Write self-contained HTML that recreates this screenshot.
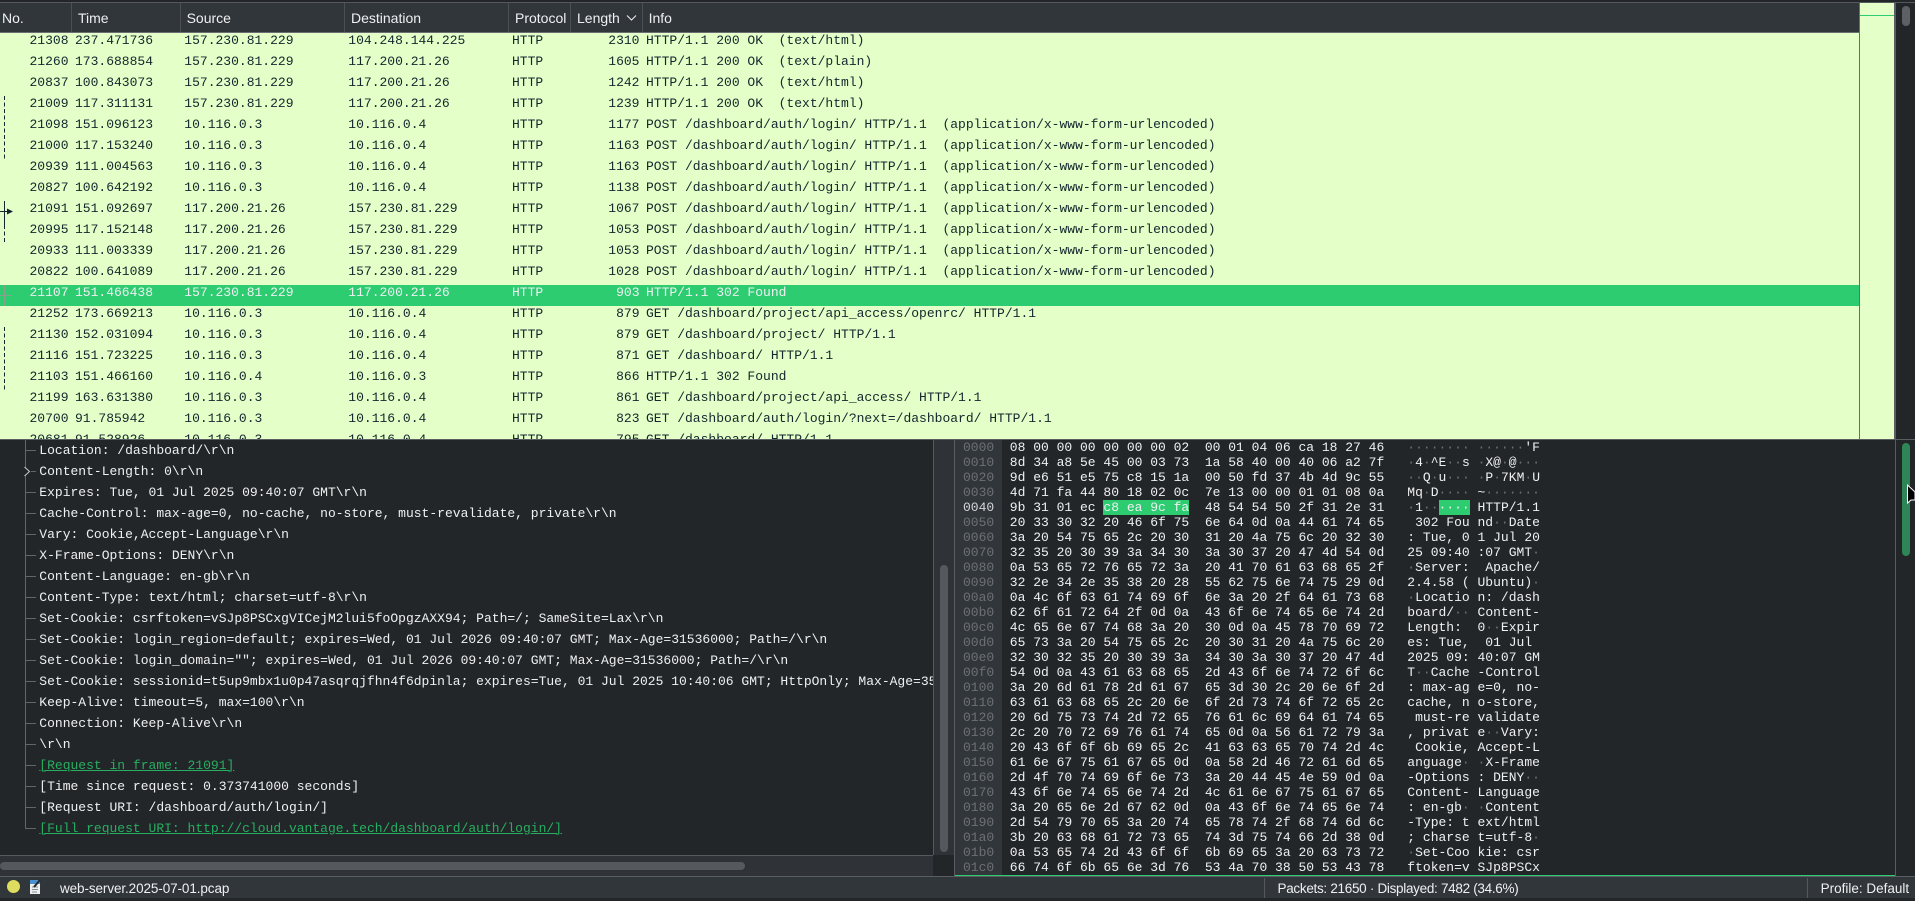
<!DOCTYPE html>
<html><head><meta charset="utf-8"><title>web-server.2025-07-01.pcap</title>
<style>
html,body{margin:0;padding:0;width:1915px;height:898px;overflow:hidden;background:#232629}
.a{position:absolute}
#hdr{left:0;top:3px;width:1859px;height:29px;background:#31363b}
#hdr span{position:absolute;top:0;line-height:31px;font:14px/31px "Liberation Sans",sans-serif;color:#eff0f1}
#hdr u{position:absolute;top:0;width:1px;height:29px;background:#4b5055}
#list{left:0;top:33px;width:1859px;height:406px;background:#e4ffc7;overflow:hidden;font:13px/15px "Liberation Mono",monospace;color:#12272e}
.r{position:relative;height:21px;white-space:pre}
.r span{position:absolute;top:0}
.r .n{left:0;width:68.5px;text-align:right}
.r .t{left:75px}.r .s{left:184.3px}.r .d{left:348.3px}.r .p{left:512px}
.r .l{left:570px;width:69.5px;text-align:right}.r .i{left:646px}
.sel{background:#2ecc71;color:#eff0f1}
#tree{left:39.3px;top:440px;width:893.7px;height:415px;overflow:hidden;font:13px/21px "Liberation Mono",monospace;color:#eff0f1;white-space:pre}
#tree a{color:#27ae60;text-decoration:underline}
pre{margin:0;font:13px/15px "Liberation Mono",monospace;color:#eff0f1;position:absolute;top:440px}
pre i{font-style:normal;color:#6d7175}
.st{position:absolute;top:877px;font:13.5px/24px "Liberation Sans",sans-serif;color:#eff0f1;white-space:pre}
</style></head><body>
<div class="a" style="left:0;top:2px;width:1915px;height:1px;background:#55595e"></div>
<div class="a" id="hdr">
<span style="left:2px">No.</span><u style="left:71px"></u>
<span style="left:78px">Time</span><u style="left:180px"></u>
<span style="left:186.6px">Source</span><u style="left:344px"></u>
<span style="left:351px">Destination</span><u style="left:508px"></u>
<span style="left:515px">Protocol</span><u style="left:570px"></u>
<span style="left:577px">Length</span><u style="left:642px"></u>
<span style="left:648.6px">Info</span>
<svg class="a" style="left:625px;top:11px" width="13" height="8"><path d="M2 1.500L6.500 6 11 1.500" fill="none" stroke="#eff0f1" stroke-width="1"/></svg>
</div>
<div class="a" style="left:0;top:32px;width:1859px;height:1px;background:#6a6e72"></div>
<div class="a" id="list">
<div class="r"><span class="n">21308</span><span class="t">237.471736</span><span class="s">157.230.81.229</span><span class="d">104.248.144.225</span><span class="p">HTTP</span><span class="l">2310</span><span class="i">HTTP/1.1 200 OK  (text/html)</span></div>
<div class="r"><span class="n">21260</span><span class="t">173.688854</span><span class="s">157.230.81.229</span><span class="d">117.200.21.26</span><span class="p">HTTP</span><span class="l">1605</span><span class="i">HTTP/1.1 200 OK  (text/plain)</span></div>
<div class="r"><span class="n">20837</span><span class="t">100.843073</span><span class="s">157.230.81.229</span><span class="d">117.200.21.26</span><span class="p">HTTP</span><span class="l">1242</span><span class="i">HTTP/1.1 200 OK  (text/html)</span></div>
<div class="r"><span class="n">21009</span><span class="t">117.311131</span><span class="s">157.230.81.229</span><span class="d">117.200.21.26</span><span class="p">HTTP</span><span class="l">1239</span><span class="i">HTTP/1.1 200 OK  (text/html)</span></div>
<div class="r"><span class="n">21098</span><span class="t">151.096123</span><span class="s">10.116.0.3</span><span class="d">10.116.0.4</span><span class="p">HTTP</span><span class="l">1177</span><span class="i">POST /dashboard/auth/login/ HTTP/1.1  (application/x-www-form-urlencoded)</span></div>
<div class="r"><span class="n">21000</span><span class="t">117.153240</span><span class="s">10.116.0.3</span><span class="d">10.116.0.4</span><span class="p">HTTP</span><span class="l">1163</span><span class="i">POST /dashboard/auth/login/ HTTP/1.1  (application/x-www-form-urlencoded)</span></div>
<div class="r"><span class="n">20939</span><span class="t">111.004563</span><span class="s">10.116.0.3</span><span class="d">10.116.0.4</span><span class="p">HTTP</span><span class="l">1163</span><span class="i">POST /dashboard/auth/login/ HTTP/1.1  (application/x-www-form-urlencoded)</span></div>
<div class="r"><span class="n">20827</span><span class="t">100.642192</span><span class="s">10.116.0.3</span><span class="d">10.116.0.4</span><span class="p">HTTP</span><span class="l">1138</span><span class="i">POST /dashboard/auth/login/ HTTP/1.1  (application/x-www-form-urlencoded)</span></div>
<div class="r"><span class="n">21091</span><span class="t">151.092697</span><span class="s">117.200.21.26</span><span class="d">157.230.81.229</span><span class="p">HTTP</span><span class="l">1067</span><span class="i">POST /dashboard/auth/login/ HTTP/1.1  (application/x-www-form-urlencoded)</span></div>
<div class="r"><span class="n">20995</span><span class="t">117.152148</span><span class="s">117.200.21.26</span><span class="d">157.230.81.229</span><span class="p">HTTP</span><span class="l">1053</span><span class="i">POST /dashboard/auth/login/ HTTP/1.1  (application/x-www-form-urlencoded)</span></div>
<div class="r"><span class="n">20933</span><span class="t">111.003339</span><span class="s">117.200.21.26</span><span class="d">157.230.81.229</span><span class="p">HTTP</span><span class="l">1053</span><span class="i">POST /dashboard/auth/login/ HTTP/1.1  (application/x-www-form-urlencoded)</span></div>
<div class="r"><span class="n">20822</span><span class="t">100.641089</span><span class="s">117.200.21.26</span><span class="d">157.230.81.229</span><span class="p">HTTP</span><span class="l">1028</span><span class="i">POST /dashboard/auth/login/ HTTP/1.1  (application/x-www-form-urlencoded)</span></div>
<div class="r sel"><span class="n">21107</span><span class="t">151.466438</span><span class="s">157.230.81.229</span><span class="d">117.200.21.26</span><span class="p">HTTP</span><span class="l">903</span><span class="i">HTTP/1.1 302 Found</span></div>
<div class="r"><span class="n">21252</span><span class="t">173.669213</span><span class="s">10.116.0.3</span><span class="d">10.116.0.4</span><span class="p">HTTP</span><span class="l">879</span><span class="i">GET /dashboard/project/api_access/openrc/ HTTP/1.1</span></div>
<div class="r"><span class="n">21130</span><span class="t">152.031094</span><span class="s">10.116.0.3</span><span class="d">10.116.0.4</span><span class="p">HTTP</span><span class="l">879</span><span class="i">GET /dashboard/project/ HTTP/1.1</span></div>
<div class="r"><span class="n">21116</span><span class="t">151.723225</span><span class="s">10.116.0.3</span><span class="d">10.116.0.4</span><span class="p">HTTP</span><span class="l">871</span><span class="i">GET /dashboard/ HTTP/1.1</span></div>
<div class="r"><span class="n">21103</span><span class="t">151.466160</span><span class="s">10.116.0.4</span><span class="d">10.116.0.3</span><span class="p">HTTP</span><span class="l">866</span><span class="i">HTTP/1.1 302 Found</span></div>
<div class="r"><span class="n">21199</span><span class="t">163.631380</span><span class="s">10.116.0.3</span><span class="d">10.116.0.4</span><span class="p">HTTP</span><span class="l">861</span><span class="i">GET /dashboard/project/api_access/ HTTP/1.1</span></div>
<div class="r"><span class="n">20700</span><span class="t">91.785942</span><span class="s">10.116.0.3</span><span class="d">10.116.0.4</span><span class="p">HTTP</span><span class="l">823</span><span class="i">GET /dashboard/auth/login/?next=/dashboard/ HTTP/1.1</span></div>
<div class="r"><span class="n">20681</span><span class="t">91.528926</span><span class="s">10.116.0.3</span><span class="d">10.116.0.4</span><span class="p">HTTP</span><span class="l">795</span><span class="i">GET /dashboard/ HTTP/1.1</span></div>
</div>
<svg class="a" style="left:0;top:0" width="16" height="440" fill="none">
<path d="M4.500 96V159M4.500 225V243M4.500 327V390" stroke="#12272e" stroke-dasharray="4 2.500"/>
<path d="M4.500 201V225M0 211.500H8" stroke="#12272e"/>
<path d="M7 208.500L13 211.500 7 214.500Z" fill="#12272e"/>
<path d="M4.500 285V306M0 295.500H12" stroke="#8a9f8c"/>
</svg>
<!-- minimap -->
<div class="a" style="left:1859px;top:3px;width:1px;height:436px;background:#6a6e72"></div>
<div class="a" style="left:1860px;top:3px;width:34px;height:436px;background:#e4ffc7"></div>
<div class="a" style="left:1860px;top:15px;width:34px;height:1px;background:#2ecc71"></div>
<div class="a" style="left:1894px;top:3px;width:2px;height:436px;background:#5a5e62"></div>
<div class="a" style="left:1902px;top:6px;width:8px;height:20px;border-radius:4px;background:#5d6165"></div>
<div class="a" style="left:0;top:439px;width:1915px;height:1px;background:#5a5e62"></div>
<!-- detail tree -->
<svg class="a" style="left:0;top:440px" width="40" height="400" fill="none" stroke="#62666a">
<path d="M25.500 0V388.500H36M26 10.500H36M31 31.500H36M26 52.500H36M26 73.500H36M26 94.500H36M26 115.500H36M26 136.500H36M26 157.500H36M26 178.500H36M26 199.500H36M26 220.500H36M26 241.500H36M26 262.500H36M26 283.500H36M26 304.500H36M26 325.500H36M26 346.500H36M26 367.500H36"/>
<path d="M24.500 27L29.500 31.500 24.500 36" stroke="#c8cacc" fill="#232629"/>
</svg>
<div class="a" id="tree">Location: /dashboard/\r\n
Content-Length: 0\r\n
Expires: Tue, 01 Jul 2025 09:40:07 GMT\r\n
Cache-Control: max-age=0, no-cache, no-store, must-revalidate, private\r\n
Vary: Cookie,Accept-Language\r\n
X-Frame-Options: DENY\r\n
Content-Language: en-gb\r\n
Content-Type: text/html; charset=utf-8\r\n
Set-Cookie: csrftoken=vSJp8PSCxgVICejM2lui5foOpgzAXX94; Path=/; SameSite=Lax\r\n
Set-Cookie: login_region=default; expires=Wed, 01 Jul 2026 09:40:07 GMT; Max-Age=31536000; Path=/\r\n
Set-Cookie: login_domain=""; expires=Wed, 01 Jul 2026 09:40:07 GMT; Max-Age=31536000; Path=/\r\n
Set-Cookie: sessionid=t5up9mbx1u0p47asqrqjfhn4f6dpinla; expires=Tue, 01 Jul 2025 10:40:06 GMT; HttpOnly; Max-Age=3599; Path=/\r\n
Keep-Alive: timeout=5, max=100\r\n
Connection: Keep-Alive\r\n
\r\n
<a>[Request in frame: 21091]</a>
[Time since request: 0.373741000 seconds]
[Request URI: /dashboard/auth/login/]
<a>[Full request URI: http://cloud.vantage.tech/dashboard/auth/login/]</a></div>
<!-- detail v scrollbar -->
<div class="a" style="left:933px;top:440px;width:1px;height:415px;background:#55595e"></div>
<div class="a" style="left:934px;top:440px;width:20px;height:415px;background:#2f3338"></div>
<div class="a" style="left:940px;top:565px;width:8px;height:287px;border-radius:4px;background:#55595e"></div>
<div class="a" style="left:954px;top:440px;width:1px;height:437px;background:#5a5e62"></div>
<!-- h scrollbar -->
<div class="a" style="left:0;top:855px;width:933px;height:1px;background:#55595e"></div>
<div class="a" style="left:0;top:856px;width:933px;height:20px;background:#2f3338"></div>
<div class="a" style="left:0;top:862px;width:745px;height:8px;border-radius:4px;background:#55595e"></div>
<!-- hex -->
<div class="a" style="left:955px;top:440px;width:47px;height:435px;background:#31363b"></div>
<div class="a" style="left:1103px;top:500px;width:86px;height:15px;background:#2ecc71"></div>
<div class="a" style="left:1438.500px;top:500px;width:31.500px;height:15px;background:#2ecc71"></div>
<pre style="left:963px;color:#6d7175">0000
0010
0020
0030
<span style="color:#d4d6d8">0040</span>
0050
0060
0070
0080
0090
00a0
00b0
00c0
00d0
00e0
00f0
0100
0110
0120
0130
0140
0150
0160
0170
0180
0190
01a0
01b0
01c0</pre>
<pre style="left:1009.800px">08 00 00 00 00 00 00 02  00 01 04 06 ca 18 27 46
8d 34 a8 5e 45 00 03 73  1a 58 40 00 40 06 a2 7f
9d e6 51 e5 75 c8 15 1a  00 50 fd 37 4b 4d 9c 55
4d 71 fa 44 80 18 02 0c  7e 13 00 00 01 01 08 0a
9b 31 01 ec c8 ea 9c fa  48 54 54 50 2f 31 2e 31
20 33 30 32 20 46 6f 75  6e 64 0d 0a 44 61 74 65
3a 20 54 75 65 2c 20 30  31 20 4a 75 6c 20 32 30
32 35 20 30 39 3a 34 30  3a 30 37 20 47 4d 54 0d
0a 53 65 72 76 65 72 3a  20 41 70 61 63 68 65 2f
32 2e 34 2e 35 38 20 28  55 62 75 6e 74 75 29 0d
0a 4c 6f 63 61 74 69 6f  6e 3a 20 2f 64 61 73 68
62 6f 61 72 64 2f 0d 0a  43 6f 6e 74 65 6e 74 2d
4c 65 6e 67 74 68 3a 20  30 0d 0a 45 78 70 69 72
65 73 3a 20 54 75 65 2c  20 30 31 20 4a 75 6c 20
32 30 32 35 20 30 39 3a  34 30 3a 30 37 20 47 4d
54 0d 0a 43 61 63 68 65  2d 43 6f 6e 74 72 6f 6c
3a 20 6d 61 78 2d 61 67  65 3d 30 2c 20 6e 6f 2d
63 61 63 68 65 2c 20 6e  6f 2d 73 74 6f 72 65 2c
20 6d 75 73 74 2d 72 65  76 61 6c 69 64 61 74 65
2c 20 70 72 69 76 61 74  65 0d 0a 56 61 72 79 3a
20 43 6f 6f 6b 69 65 2c  41 63 63 65 70 74 2d 4c
61 6e 67 75 61 67 65 0d  0a 58 2d 46 72 61 6d 65
2d 4f 70 74 69 6f 6e 73  3a 20 44 45 4e 59 0d 0a
43 6f 6e 74 65 6e 74 2d  4c 61 6e 67 75 61 67 65
3a 20 65 6e 2d 67 62 0d  0a 43 6f 6e 74 65 6e 74
2d 54 79 70 65 3a 20 74  65 78 74 2f 68 74 6d 6c
3b 20 63 68 61 72 73 65  74 3d 75 74 66 2d 38 0d
0a 53 65 74 2d 43 6f 6f  6b 69 65 3a 20 63 73 72
66 74 6f 6b 65 6e 3d 76  53 4a 70 38 50 53 43 78</pre>
<pre style="left:1407.300px"><i>········</i> <i>······</i>'F
<i>·</i>4<i>·</i>^E<i>··</i>s <i>·</i>X@<i>·</i>@<i>···</i>
<i>··</i>Q<i>·</i>u<i>···</i> <i>·</i>P<i>·</i>7KM<i>·</i>U
Mq<i>·</i>D<i>····</i> ~<i>·······</i>
<i>·</i>1<i>··</i>···· HTTP/1.1
 302 Fou nd<i>··</i>Date
: Tue, 0 1 Jul 20
25 09:40 :07 GMT<i>·</i>
<i>·</i>Server:  Apache/
2.4.58 ( Ubuntu)<i>·</i>
<i>·</i>Locatio n: /dash
board/<i>··</i> Content-
Length:  0<i>··</i>Expir
es: Tue,  01 Jul 
2025 09: 40:07 GM
T<i>··</i>Cache -Control
: max-ag e=0, no-
cache, n o-store,
 must-re validate
, privat e<i>··</i>Vary:
 Cookie, Accept-L
anguage<i>·</i> <i>·</i>X-Frame
-Options : DENY<i>··</i>
Content- Language
: en-gb<i>·</i> <i>·</i>Content
-Type: t ext/html
; charse t=utf-8<i>·</i>
<i>·</i>Set-Coo kie: csr
ftoken=v SJp8PSCx</pre>
<div class="a" style="left:955px;top:875px;width:940px;height:1px;background:#2ecc71"></div>
<!-- right v scrollbar -->
<div class="a" style="left:1895px;top:440px;width:1px;height:437px;background:#5a5e62"></div>
<div class="a" style="left:1902px;top:443px;width:8px;height:113px;border-radius:4px;background:#2e8555"></div>
<svg class="a" style="left:1900px;top:480px" width="15" height="30"><path d="M7.500 5V23L11 20 15 20V12Z" fill="#000" stroke="#fff" stroke-width="1"/></svg>
<!-- status bar -->
<div class="a" style="left:0;top:876px;width:1915px;height:1px;background:#5a5e62"></div>
<div class="a" style="left:0;top:877px;width:1915px;height:21px;background:#31363b"></div>
<svg class="a" style="left:5px;top:878px" width="40" height="18">
<ellipse cx="8.500" cy="8.500" rx="6.500" ry="6.500" fill="#dedd5f"/>
<rect x="25" y="2" width="10" height="14" fill="#eceff0"/>
<rect x="25" y="2" width="10" height="4" fill="#4a8fd0"/>
<path d="M27 9H33M27 11.500H33M27 14H32" stroke="#8a8f94"/>
<path d="M29 9L35 2" stroke="#23262a" stroke-width="2"/>
</svg>
<div class="st" style="left:60px;letter-spacing:-0.1px">web-server.2025-07-01.pcap</div>
<div class="a" style="left:1264px;top:878px;width:1px;height:20px;background:#55595e"></div>
<div class="st" style="left:1277.500px;letter-spacing:-0.3px">Packets: 21650 · Displayed: 7482 (34.6%)</div>
<div class="a" style="left:1807px;top:878px;width:1px;height:20px;background:#55595e"></div>
<div class="st" style="left:1820.600px">Profile: Default</div>
</body></html>
